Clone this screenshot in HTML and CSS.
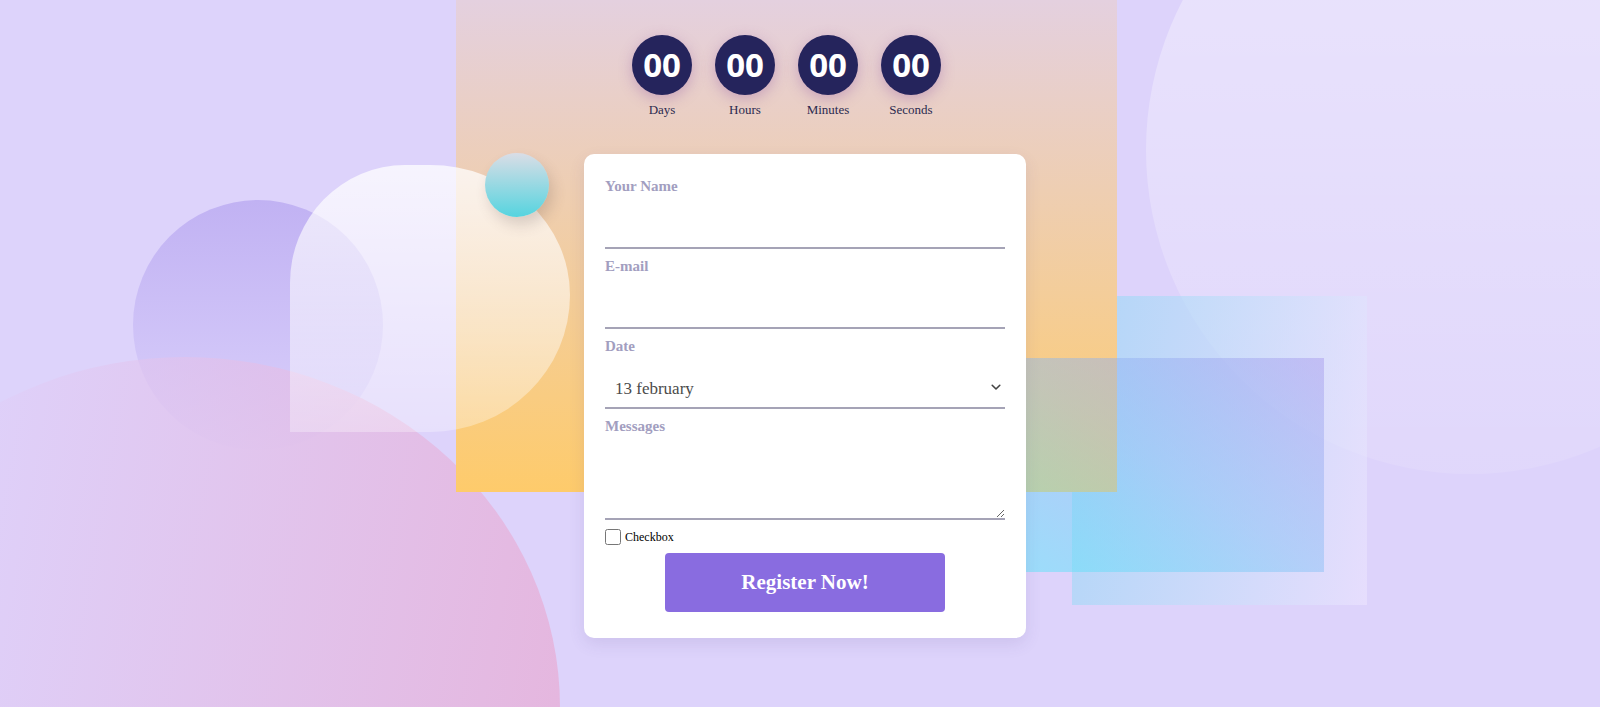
FILE: index.html
```html
<!DOCTYPE html>
<html lang="en">
<head>
<meta charset="utf-8">
<title>Register</title>
<link rel="stylesheet" href="styles.css">
</head>
<body>
  <div class="shape sun"></div>
  <div class="shape orb"></div>
  <div class="shape blob"></div>
  <div class="shape pane-back"></div>

  <main class="panel">
    <div class="countdown">
      <div class="unit"><div class="dial">00</div><div class="unit-label">Days</div></div>
      <div class="unit"><div class="dial">00</div><div class="unit-label">Hours</div></div>
      <div class="unit"><div class="dial">00</div><div class="unit-label">Minutes</div></div>
      <div class="unit"><div class="dial">00</div><div class="unit-label">Seconds</div></div>
    </div>

    <form class="card">
      <label class="field-label" for="name">Your Name</label>
      <input class="field" id="name" type="text">

      <label class="field-label" for="email">E-mail</label>
      <input class="field" id="email" type="email">

      <label class="field-label" for="date">Date</label>
      <div class="select-wrap">
        <select class="field select" id="date">
          <option>13 february</option>
          <option>14 february</option>
          <option>15 february</option>
        </select>
        <svg class="chevron" width="10" height="7" viewBox="0 0 10 7"><path d="M1.2 1.3 L5 5 L8.8 1.3" fill="none" stroke="#444" stroke-width="1.6" stroke-linecap="round" stroke-linejoin="round"/></svg>
      </div>

      <label class="field-label" for="msg">Messages</label>
      <textarea class="field area" id="msg"></textarea>

      <div class="check-row">
        <input class="check" id="cb" type="checkbox">
        <label class="check-label" for="cb">Checkbox</label>
      </div>

      <div class="actions">
        <button class="btn" type="button">Register Now!</button>
      </div>
    </form>
  </main>

  <div class="shape arch"></div>
  <div class="shape pane-front"></div>
  <div class="shape bubble"></div>
</body>
</html>
```

FILE: styles.css
```css
html {
  background: #ddd3fb;
}

body {
  margin: 0;
  height: 707px;
  overflow: hidden;
  font-family: "Liberation Serif", "Times New Roman", serif;
}

.shape {
  position: absolute;
}

.sun {
  left: 1146px;
  top: -174px;
  width: 648px;
  height: 648px;
  border-radius: 50%;
  background: linear-gradient(to bottom, rgba(255, 255, 255, 0.42), rgba(255, 255, 255, 0.1));
  z-index: -1;
}

.orb {
  left: 133px;
  top: 200px;
  width: 250px;
  height: 250px;
  border-radius: 50%;
  background: linear-gradient(to bottom, #c1b2f3, rgba(208, 198, 250, 0.2));
  z-index: -1;
}

.blob {
  left: -190px;
  top: 357px;
  width: 750px;
  height: 700px;
  border-radius: 50%;
  background: linear-gradient(100deg, rgba(224, 206, 248, 0.45) 20%, rgba(229, 182, 222, 1) 95%);
  z-index: -1;
}

.pane-back {
  left: 1072px;
  top: 296px;
  width: 295px;
  height: 309px;
  background: linear-gradient(100deg, rgba(150, 215, 245, 0.65), rgba(240, 232, 255, 0.5));
  z-index: -1;
}

.arch {
  left: 290px;
  top: 165px;
  width: 280px;
  height: 267px;
  border-radius: 115px 140px 140px 0 / 118px 130px 137px 0;
  background: linear-gradient(to bottom, rgba(255, 255, 255, 0.75), rgba(255, 255, 255, 0.3));
  z-index: 1;
}

.pane-front {
  left: 990px;
  top: 358px;
  width: 334px;
  height: 214px;
  background: linear-gradient(to top right, rgba(85, 235, 250, 0.5) 0%, rgba(130, 190, 245, 0.45) 50%, rgba(165, 150, 236, 0.45) 100%);
  z-index: 1;
}

.bubble {
  left: 485px;
  top: 153px;
  width: 64px;
  height: 64px;
  border-radius: 50%;
  background: linear-gradient(to bottom, #dadde6, #55d4df);
  box-shadow: 4px 8px 14px rgba(90, 70, 70, 0.2);
  z-index: 3;
}

/* main panel */
.panel {
  display: block;
  margin-left: 456px;
  width: 661px;
  height: 492px;
  box-sizing: border-box;
  padding-top: 35px;
  background: linear-gradient(to bottom, #e4d0df 0%, #fecb6b 100%);
}

.countdown {
  display: flex;
  justify-content: center;
  gap: 23px;
}

.unit {
  width: 60px;
  display: flex;
  flex-direction: column;
  align-items: center;
}

.dial {
  width: 60px;
  height: 60px;
  border-radius: 50%;
  background: #25245c;
  color: #fff;
  font-family: "Open Sans", "Noto Sans", sans-serif;
  font-weight: 700;
  font-size: 33px;
  line-height: 60px;
  text-align: center;
  box-shadow: 0 4px 14px rgba(140, 80, 160, 0.35);
}

.unit-label {
  margin-top: 7px;
  font-size: 13px;
  line-height: 15px;
  color: #2b2a50;
  white-space: nowrap;
}

/* card */
.card {
  position: relative;
  z-index: 2;
  margin: 37px 0 0 128px;
  width: 442px;
  box-sizing: border-box;
  padding: 23px 21px 26px;
  background: #fff;
  border-radius: 10px;
  box-shadow: 0 6px 16px rgba(90, 70, 140, 0.12);
}

.field-label {
  display: block;
  font-size: 15px;
  font-weight: 700;
  line-height: 18px;
  color: #a29ec0;
}

.field {
  display: block;
  width: 100%;
  height: 54px;
  box-sizing: border-box;
  margin: 0 0 8px;
  padding: 0;
  border: none;
  border-bottom: 2px solid #a5a3b6;
  background: transparent;
  outline: none;
  font-family: "Liberation Serif", "Times New Roman", serif;
  font-size: 17px;
  color: #4b4b4b;
}

.select-wrap {
  position: relative;
}

.select {
  appearance: none;
  -webkit-appearance: none;
  padding: 14px 0 0 10px;
  border-radius: 0;
}

.chevron {
  position: absolute;
  right: 4px;
  top: 29px;
  pointer-events: none;
}

.area {
  height: 85px;
  margin-bottom: 9px;
  resize: vertical;
}

.check-row {
  display: flex;
  align-items: center;
  gap: 4px;
  height: 16px;
}

.check {
  width: 16px;
  height: 16px;
  margin: 0;
}

.check-label {
  font-size: 12px;
  color: #000;
}

.actions {
  display: flex;
  justify-content: center;
  margin-top: 8px;
}

.btn {
  width: 280px;
  height: 59px;
  border: none;
  border-radius: 4px;
  background: #896ce0;
  color: #fff;
  font-family: "Liberation Serif", "Times New Roman", serif;
  font-weight: 700;
  font-size: 21px;
  cursor: pointer;
}
```
